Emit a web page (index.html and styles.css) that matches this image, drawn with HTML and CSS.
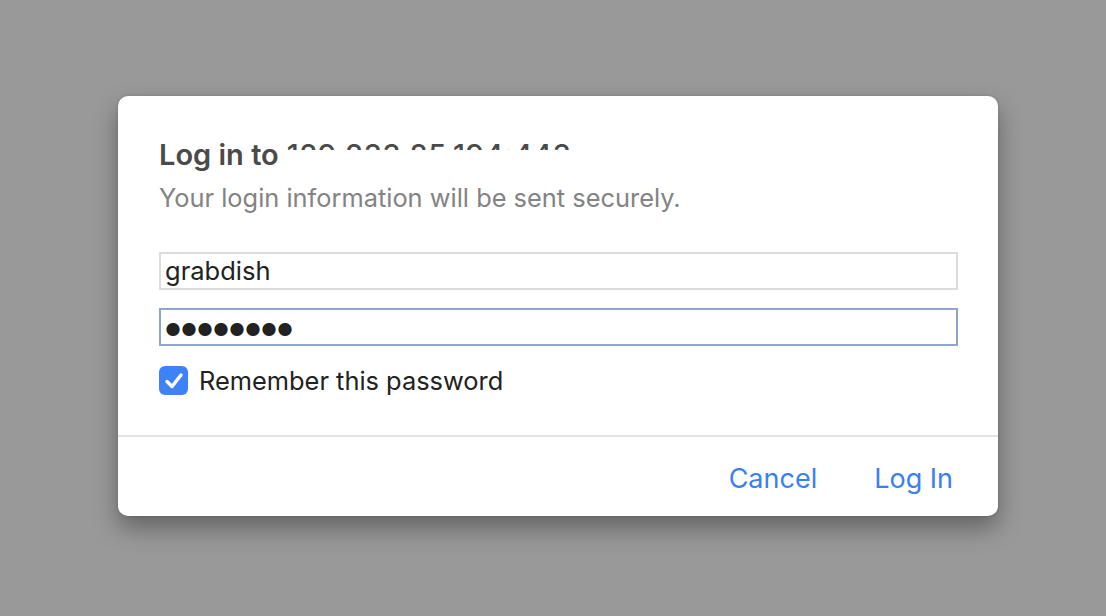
FILE: index.html
```html
<!DOCTYPE html>
<html>
<head>
<meta charset="utf-8">
<link rel="stylesheet" href="styles.css">
</head>
<body>
<div class="screen">
  <div class="dialog">
    <div class="body">
      <h1 class="title">Log in to <span class="host"><span class="host-inner">129.233.85.194:443</span></span></h1>
      <p class="subtitle">Your login information will be sent securely.</p>
      <div class="field">grabdish</div>
      <div class="field focused"><span class="dots">●●●●●●●●</span></div>
      <label class="remember">
        <span class="check"><svg width="20" height="18" viewBox="0 0 20 18"><path d="M3 9.5 L8 14.5 L17 3" fill="none" stroke="#fff" stroke-width="3.4" stroke-linecap="round" stroke-linejoin="round"/></svg></span>
        <span>Remember this password</span>
      </label>
    </div>
    <div class="footer">
      <button class="btn">Cancel</button>
      <button class="btn">Log In</button>
    </div>
  </div>
</div>
</body>
</html>
```
FILE: styles.css
```css
html, body {
  margin: 0;
  padding: 0;
}
body {
  width: 1106px;
  height: 616px;
  background: #999999;
  font-family: Inter, "Liberation Sans", sans-serif;
  overflow: hidden;
}
.screen {
  padding: 96px 0 0 118px;
}
.dialog {
  width: 880px;
  height: 420px;
  background: #fff;
  border-radius: 10px;
  box-shadow: 0 12px 24px rgba(0,0,0,0.35), 0 0 3px rgba(0,0,0,0.15);
  display: flex;
  flex-direction: column;
  overflow: hidden;
}
.body {
  padding: 39px 40px 0 41px;
  height: 341px;
  box-sizing: border-box;
  border-bottom: 2px solid #e3e3e3;
}
.title {
  margin: 0;
  font-size: 29px;
  font-weight: 600;
  color: #4a4a4a;
  line-height: 40px;
  height: 40px;
  white-space: nowrap;
  display: flex;
  align-items: flex-start;
}
.host {
  display: block;
  margin-left: 8px;
  height: 15px;
  overflow: hidden;
  font-weight: 500;
  letter-spacing: 0.6px;
}
.subtitle {
  margin: 3px 0 0;
  font-size: 25.4px;
  color: #838383;
  line-height: 40px;
}
.field {
  margin-top: 34px;
  width: 799px;
  height: 38px;
  box-sizing: border-box;
  border: 2px solid #dcdcdc;
  font-size: 25.5px;
  color: #222;
  line-height: 33px;
  padding-left: 4px;
}
.field.focused {
  margin-top: 18px;
  border-color: #8ea5cd;
}
.dots {
  font-size: 17.5px;
  letter-spacing: 0;
  color: #222;
}
.remember {
  display: flex;
  align-items: center;
  gap: 11px;
  margin-top: 19px;
  font-size: 25.4px;
  color: #222;
}
.check {
  width: 29px;
  height: 29px;
  border-radius: 6px;
  background: #3d83f7;
  display: flex;
  align-items: center;
  justify-content: center;
}
.footer {
  flex: 1;
  display: flex;
  justify-content: flex-end;
  align-items: center;
  gap: 57px;
  padding: 3px 45px 0 0;
}
.btn {
  border: 0;
  background: none;
  padding: 0;
  font-family: Inter, "Liberation Sans", sans-serif;
  font-size: 27px;
  color: #3a7ff2;
}
```
